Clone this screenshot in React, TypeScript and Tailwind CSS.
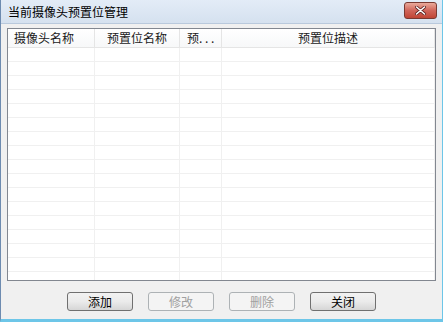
import React from "react";

const cols = [
  { label: "摄像头名称", w: "w-[87px]", align: "justify-start pl-[6px]" },
  { label: "预置位名称", w: "w-[85px]", align: "justify-center" },
  { label: "预. . .", w: "w-[42px]", align: "justify-start pl-[7px]" },
  { label: "预置位描述", w: "flex-1", align: "justify-center" },
];

const rows = Array.from({ length: 17 });

function Btn({ label, disabled }: { label: string; disabled?: boolean }) {
  return (
    <button
      className={`w-[66px] h-[19px] rounded-[3px] border text-[12px] leading-none flex items-center justify-center ${
        disabled
          ? "border-[#adb2b5] bg-[#f4f4f4] text-[#a0a0a0]"
          : "border-[#707070] bg-gradient-to-b from-[#f2f2f2] via-[#ebebeb] to-[#d6d6d6] text-black"
      }`}
    >
      {label}
    </button>
  );
}

export default function App() {
  return (
    <div
      className="w-[443px] h-[322px] flex flex-col bg-[#f0f0f0] border-l border-r border-b-[3px] border-l-[#6d8bb0] border-r-[#6dc6e8] border-b-[#6dc6e8] overflow-hidden"
      style={{ fontFamily: '"Noto Sans CJK SC", "Noto Sans", sans-serif' }}
    >
      {/* 标题栏 */}
      <div className="h-[24px] shrink-0 flex items-center justify-between pl-[7px] pr-[5px] bg-gradient-to-b from-[#e3ecf7] to-[#d5e1ef] border-b border-[#b9c9dc]">
        <span className="text-[12px] text-black">当前摄像头预置位管理</span>
        <div className="w-[33px] h-[17px] -mt-[3px] rounded-[3px] border border-[#7a3a32] bg-gradient-to-b from-[#e9a99b] via-[#d0655a] to-[#c04535] flex items-center justify-center">
          <svg width="11" height="9" viewBox="0 0 11 9">
            <path d="M1.5 1 L9.5 8 M9.5 1 L1.5 8" stroke="#5a2020" strokeWidth="3" strokeLinecap="round" />
            <path d="M1.5 1 L9.5 8 M9.5 1 L1.5 8" stroke="white" strokeWidth="1.6" strokeLinecap="round" />
          </svg>
        </div>
      </div>

      {/* 客户区 */}
      <div className="flex-1 flex flex-col px-[6px] pt-[4px]">
        <div className="h-[253px] flex flex-col bg-white border border-[#828790] overflow-hidden">
          <div className="h-[19px] shrink-0 flex border-b border-[#e5e5e5] bg-gradient-to-b from-white to-[#f7f8f9]">
            {cols.map((c, i) => (
              <div
                key={i}
                className={`${c.w} h-full flex items-center text-[12px] text-[#1a1a1a] whitespace-nowrap border-r border-[#e5e5e5] ${c.align}`}
              >
                {c.label}
              </div>
            ))}
          </div>
          <div className="flex-1 flex flex-col">
            {rows.map((_, r) => (
              <div key={r} className="h-[14px] shrink-0 flex border-b border-[#f0f0f0]">
                {cols.map((c, i) => (
                  <div key={i} className={`${c.w} h-full border-r border-[#f0f0f0]`} />
                ))}
              </div>
            ))}
          </div>
        </div>

        <div className="flex items-center gap-[15px] pl-[60px] mt-[11px]">
          <Btn label="添加" />
          <Btn label="修改" disabled />
          <Btn label="删除" disabled />
          <Btn label="关闭" />
        </div>
      </div>
    </div>
  );
}
